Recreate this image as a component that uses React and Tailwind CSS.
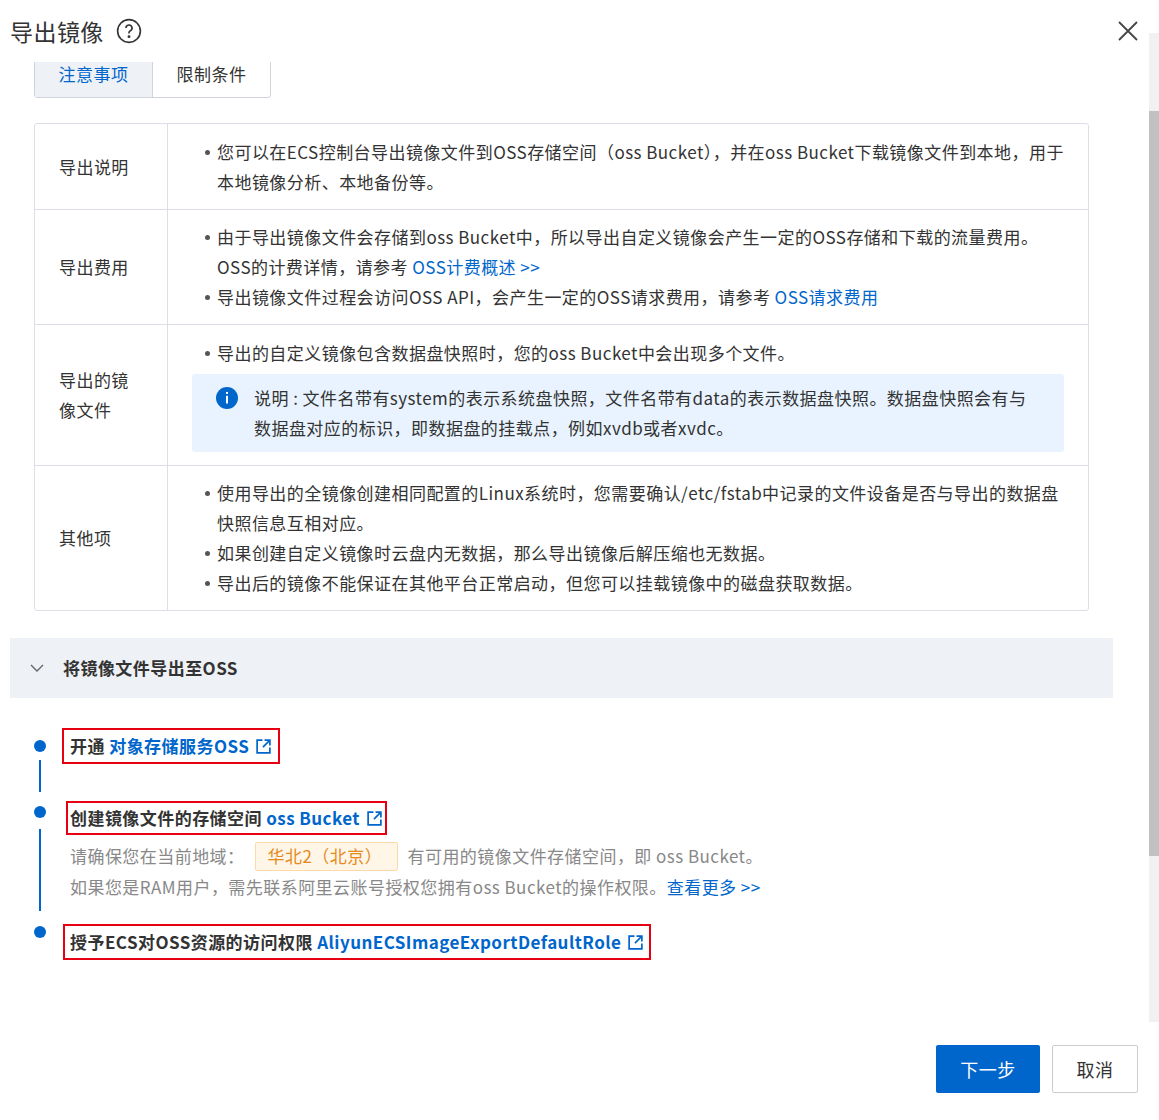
import React from "react";

const F = { fontFamily: '"Noto Sans CJK SC", "Noto Sans", sans-serif' };

function Ext() {
  return (
    <svg width="17" height="17" viewBox="0 0 16 16" fill="none" stroke="#0066cc" strokeWidth="1.6" className="inline-block ml-[6px] -mt-[3px]">
      <path d="M7 2H2v12h12V9" />
      <path d="M9 2h5v5M14 2L7.5 8.5" />
    </svg>
  );
}

function Li({ children }) {
  return (
    <li className="flex">
      <span className="w-[25px] shrink-0 pl-[13px] pt-[13px]"><span className="block w-[5px] h-[5px] rounded-full bg-[#555]" /></span>
      <span>{children}</span>
    </li>
  );
}

function Row({ label, h, children }) {
  return (
    <div className="flex border-t border-[#dcdfe6] first:border-t-0" style={{ minHeight: h }}>
      <div className="w-[133px] shrink-0 border-r border-[#dcdfe6] pl-[24px] flex items-center">{label}</div>
      <div className="flex-1 px-[24px] py-[12px] flex flex-col justify-center">{children}</div>
    </div>
  );
}

export default function App() {
  return (
    <div className="relative w-[1159px] h-[1120px] bg-white text-[#333] overflow-hidden text-[17px] leading-[30px] tracking-[0.45px]" style={F}>
      <div className="h-[62px] flex items-center pl-[10px] pr-[20px]">
        <span className="text-[23px] text-[#333]">导出镜像</span>
        <svg width="26" height="26" viewBox="0 0 24 24" fill="none" stroke="#333" strokeWidth="1.5" className="ml-[12px]">
          <circle cx="12" cy="12" r="10.5" />
          <path d="M9.2 9.3a2.8 2.8 0 1 1 3.8 2.6c-.7.3-1 .8-1 1.5v.8" />
          <circle cx="12" cy="17.2" r=".6" fill="#333" />
        </svg>
        <div className="flex-1" />
        <svg width="22" height="22" viewBox="0 0 22 22" stroke="#444" strokeWidth="1.8"><path d="M2 2l18 18M20 2L2 20" /></svg>
      </div>

      <div className="absolute right-0 top-[33px] w-[10px] h-[989px] bg-[#f1f1f1]">
        <div className="mt-[78px] h-[745px] bg-[#c1c1c1]" />
      </div>

      <div className="h-[968px] overflow-hidden">
        <div className="-mt-[17px]">
          <div className="ml-[34px] flex w-[237px] h-[53px] border border-[#d0d3d9] rounded-b-[3px]">
            <div className="w-[118px] bg-[#eef1f6] border-r border-[#d0d3d9] text-[#0066cc] flex items-end justify-center pb-[8px]">注意事项</div>
            <div className="flex-1 flex items-end justify-center pb-[8px]">限制条件</div>
          </div>

          <div className="ml-[34px] mt-[25px] w-[1055px] border border-[#dcdfe6] rounded-[3px]">
            <Row label="导出说明" h={85}>
              <ul><Li>您可以在ECS控制台导出镜像文件到OSS存储空间（oss Bucket），并在oss Bucket下载镜像文件到本地，用于本地镜像分析、本地备份等。</Li></ul>
            </Row>
            <Row label="导出费用" h={115}>
              <ul>
                <Li>由于导出镜像文件会存储到oss Bucket中，所以导出自定义镜像会产生一定的OSS存储和下载的流量费用。OSS的计费详情，请参考 <span className="text-[#0066cc]">OSS计费概述 &gt;&gt;</span></Li>
                <Li>导出镜像文件过程会访问OSS API，会产生一定的OSS请求费用，请参考 <span className="text-[#0066cc]">OSS请求费用</span></Li>
              </ul>
            </Row>
            <Row label={<span>导出的镜<br />像文件</span>} h={141}>
              <ul><Li>导出的自定义镜像包含数据盘快照时，您的oss Bucket中会出现多个文件。</Li></ul>
              <div className="mt-[6px] bg-[#e8f3ff] rounded-[3px] flex px-[24px] py-[9px]">
                <svg width="22" height="22" viewBox="0 0 20 20" className="shrink-0 mt-[4px] mr-[16px]">
                  <circle cx="10" cy="10" r="10" fill="#0066cc" />
                  <rect x="9.1" y="8" width="1.8" height="7" fill="#fff" />
                  <rect x="9.1" y="4.5" width="1.8" height="1.8" fill="#fff" />
                </svg>
                <span>说明 : 文件名带有system的表示系统盘快照，文件名带有data的表示数据盘快照。数据盘快照会有与数据盘对应的标识，即数据盘的挂载点，例如xvdb或者xvdc。</span>
              </div>
            </Row>
            <Row label="其他项" h={145}>
              <ul>
                <Li>使用导出的全镜像创建相同配置的Linux系统时，您需要确认/etc/fstab中记录的文件设备是否与导出的数据盘快照信息互相对应。</Li>
                <Li>如果创建自定义镜像时云盘内无数据，那么导出镜像后解压缩也无数据。</Li>
                <Li>导出后的镜像不能保证在其他平台正常启动，但您可以挂载镜像中的磁盘获取数据。</Li>
              </ul>
            </Row>
          </div>

          <div className="ml-[10px] mt-[27px] w-[1103px] h-[60px] bg-[#eef1f6] flex items-center">
            <svg width="16" height="16" viewBox="0 0 16 16" fill="none" stroke="#666" strokeWidth="1.4" className="ml-[19px] mr-[18px]"><path d="M2 5l6 6 6-6" /></svg>
            <span className="font-semibold text-[#333]">将镜像文件导出至OSS</span>
          </div>

          <div className="ml-[34px] mt-[30px] flex">
            <div className="w-[12px] flex flex-col items-center">
              <div className="h-[12px] w-[12px] rounded-full bg-[#0066cc] mt-[12px]" />
              <div className="w-[1.5px] bg-[#0066cc] h-[32px] mt-[8px]" />
              <div className="h-[12px] w-[12px] rounded-full bg-[#0066cc] mt-[14px]" />
              <div className="w-[1.5px] bg-[#0066cc] h-[82px] mt-[11px]" />
              <div className="h-[12px] w-[12px] rounded-full bg-[#0066cc] mt-[15px]" />
            </div>
            <div className="ml-[16px] font-bold">
              <div className="inline-block border-2 border-[#e60012] h-[36px] px-[6px] leading-[32px]">开通 <span className="text-[#0066cc]">对象存储服务OSS</span><Ext /></div>
              <div className="mt-[37px] ml-[4px] border-2 border-[#e60012] h-[34px] px-[2px] leading-[30px] w-fit">创建镜像文件的存储空间 <span className="text-[#0066cc]">oss Bucket</span><Ext /></div>
              <div className="ml-[8px] mt-[5px] font-normal text-[#888]">
                <div className="flex items-center h-[32px]">请确保您在当前地域：<span className="mx-[10px] inline-flex items-center h-[29px] w-[143px] pl-[12px] border border-[#fbd9a8] bg-[#fff6e8] text-[#e58a1b] rounded-[2px]">华北2（北京）</span>有可用的镜像文件存储空间，即 oss Bucket。</div>
                <div>如果您是RAM用户，需先联系阿里云账号授权您拥有oss Bucket的操作权限。<span className="text-[#0066cc]">查看更多 &gt;&gt;</span></div>
              </div>
              <div className="mt-[22px] ml-[1px] border-2 border-[#e60012] h-[36px] px-[5px] leading-[32px] w-fit">授予ECS对OSS资源的访问权限 <span className="text-[#0066cc]">AliyunECSImageExportDefaultRole</span><Ext /></div>
            </div>
          </div>
        </div>
      </div>

      <div className="absolute left-0 top-[1045px] w-full flex justify-end pr-[21px] gap-[12px]">
        <div className="w-[104px] h-[48px] bg-[#0066cc] text-white rounded-[2px] flex items-center justify-center text-[18px]">下一步</div>
        <div className="w-[86px] h-[48px] border border-[#ccc] rounded-[2px] flex items-center justify-center text-[18px]">取消</div>
      </div>
    </div>
  );
}
